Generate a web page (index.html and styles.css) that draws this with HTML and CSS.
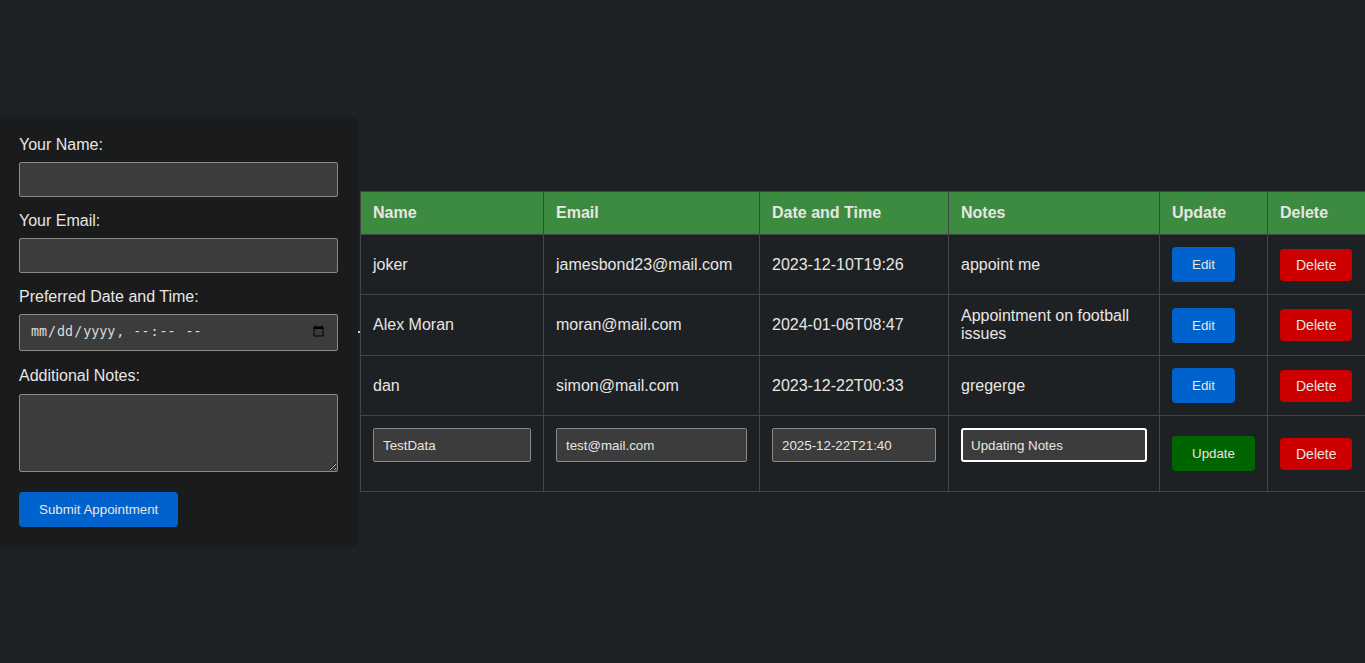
FILE: index.html
```html
<!DOCTYPE html>
<html lang="en">
<head>
<meta charset="utf-8">
<title>Appointments</title>
<link rel="stylesheet" href="styles.css">
</head>
<body>
<div class="page">
  <form class="card">
    <label class="label">Your Name:</label>
    <input class="field" type="text">
    <label class="label">Your Email:</label>
    <input class="field" type="email">
    <label class="label">Preferred Date and Time:</label>
    <input class="field date" type="datetime-local">
    <label class="label">Additional Notes:</label>
    <textarea class="field notes"></textarea>
    <button class="btn btn-blue" type="button">Submit Appointment</button>
  </form>
  <span class="dot"></span>
  <div class="table-wrap">
    <table class="table">
      <colgroup>
        <col class="c1"><col class="c2"><col class="c3"><col class="c4"><col class="c5"><col class="c6">
      </colgroup>
      <thead>
        <tr><th>Name</th><th>Email</th><th>Date and Time</th><th>Notes</th><th>Update</th><th>Delete</th></tr>
      </thead>
      <tbody>
        <tr>
          <td>joker</td><td>jamesbond23@mail.com</td><td>2023-12-10T19:26</td><td>appoint me</td>
          <td><button class="btn btn-blue" type="button">Edit</button></td>
          <td><button class="btn-del" type="button">Delete</button></td>
        </tr>
        <tr>
          <td>Alex Moran</td><td>moran@mail.com</td><td>2024-01-06T08:47</td><td>Appointment on football issues</td>
          <td><button class="btn btn-blue" type="button">Edit</button></td>
          <td><button class="btn-del" type="button">Delete</button></td>
        </tr>
        <tr>
          <td>dan</td><td>simon@mail.com</td><td>2023-12-22T00:33</td><td>gregerge</td>
          <td><button class="btn btn-blue" type="button">Edit</button></td>
          <td><button class="btn-del" type="button">Delete</button></td>
        </tr>
        <tr>
          <td><input class="cell-input" type="text" value="TestData"></td>
          <td><input class="cell-input" type="text" value="test@mail.com"></td>
          <td><input class="cell-input" type="text" value="2025-12-22T21:40"></td>
          <td><input class="cell-input focused" type="text" value="Updating Notes"></td>
          <td><button class="btn btn-green" type="button">Update</button></td>
          <td><button class="btn-del" type="button">Delete</button></td>
        </tr>
      </tbody>
    </table>
  </div>
</div>
</body>
</html>
```

FILE: styles.css
```css
* { box-sizing: border-box; }
html, body { margin: 0; padding: 0; }
body {
  background: #1e2123;
  color: #e8e6e3;
  font-family: "Liberation Sans", Arial, sans-serif;
  font-size: 16px;
}
.page {
  display: flex;
  align-items: center;
  height: 100vh;
}
.card {
  flex: 0 0 358px;
  width: 358px;
  background: #1a1b1d;
  border-radius: 0 8px 8px 0;
  padding: 19px 20px 20px 19px;
  display: flex;
  flex-direction: column;
  align-items: flex-start;
}
.label {
  display: block;
  margin-bottom: 8px;
  line-height: 18px;
  color: #e8e6e3;
}
.field {
  display: block;
  width: 319px;
  height: 35px;
  margin: 0 0 15px 0;
  background: #3c3c3c;
  border: 1px solid #8a8a8a;
  border-radius: 2px;
  color: #e8e6e3;
  font-family: "Liberation Sans", Arial, sans-serif;
  font-size: 13.3333px;
  padding: 0 10px;
}
.date {
  height: 37px;
  margin-bottom: 16px;
  font-family: "DejaVu Sans Mono", monospace;
  font-size: 13.3333px;
  color: #dcdcdc;
  padding: 0 10px;
}
.notes {
  height: 78px;
  resize: vertical;
  margin-top: 1px;
  margin-bottom: 20px;
}
.btn {
  border: none;
  border-radius: 4px;
  padding: 10px 20px;
  font-family: "Liberation Sans", Arial, sans-serif;
  font-size: 13.3333px;
  line-height: 15px;
  color: #e8e6e3;
  cursor: pointer;
}
.btn-blue { background: #0062cc; }
.btn-green { background: #006400; }
.btn-del {
  border: none;
  border-radius: 4px;
  padding: 8px 16px;
  background: #cc0000;
  color: #e8e6e3;
  font-family: "Liberation Sans", Arial, sans-serif;
  font-size: 14px;
  line-height: 16px;
}
.dot {
  flex: 0 0 2px;
  width: 2px;
  height: 2px;
  background: #d0d0d0;
}
.table-wrap {
  flex: 1 1 auto;
  margin-top: 20px;
}
.table {
  width: 100%;
  border-collapse: collapse;
  table-layout: fixed;
}
.c1 { width: 183px; }
.c2 { width: 216px; }
.c3 { width: 189px; }
.c4 { width: 211px; }
.c5 { width: 108px; }
.c6 { width: 98px; }
.table th, .table td {
  border: 1px solid #444;
  padding: 12px;
  text-align: left;
  vertical-align: middle;
  line-height: 18px;
}
.table th {
  background: #3d8b40;
  font-weight: bold;
  color: #e8e6e3;
}
.cell-input {
  display: block;
  width: 100%;
  height: 34px;
  margin-bottom: 17px;
  background: #3c3c3c;
  border: 1px solid #8a8a8a;
  border-radius: 2px;
  color: #e8e6e3;
  font-family: "Liberation Sans", Arial, sans-serif;
  font-size: 13.3333px;
  padding: 0 9px;
}
.focused {
  border: 2px solid #ffffff;
  border-radius: 3px;
  padding: 0 8px;
  outline: none;
}
```
